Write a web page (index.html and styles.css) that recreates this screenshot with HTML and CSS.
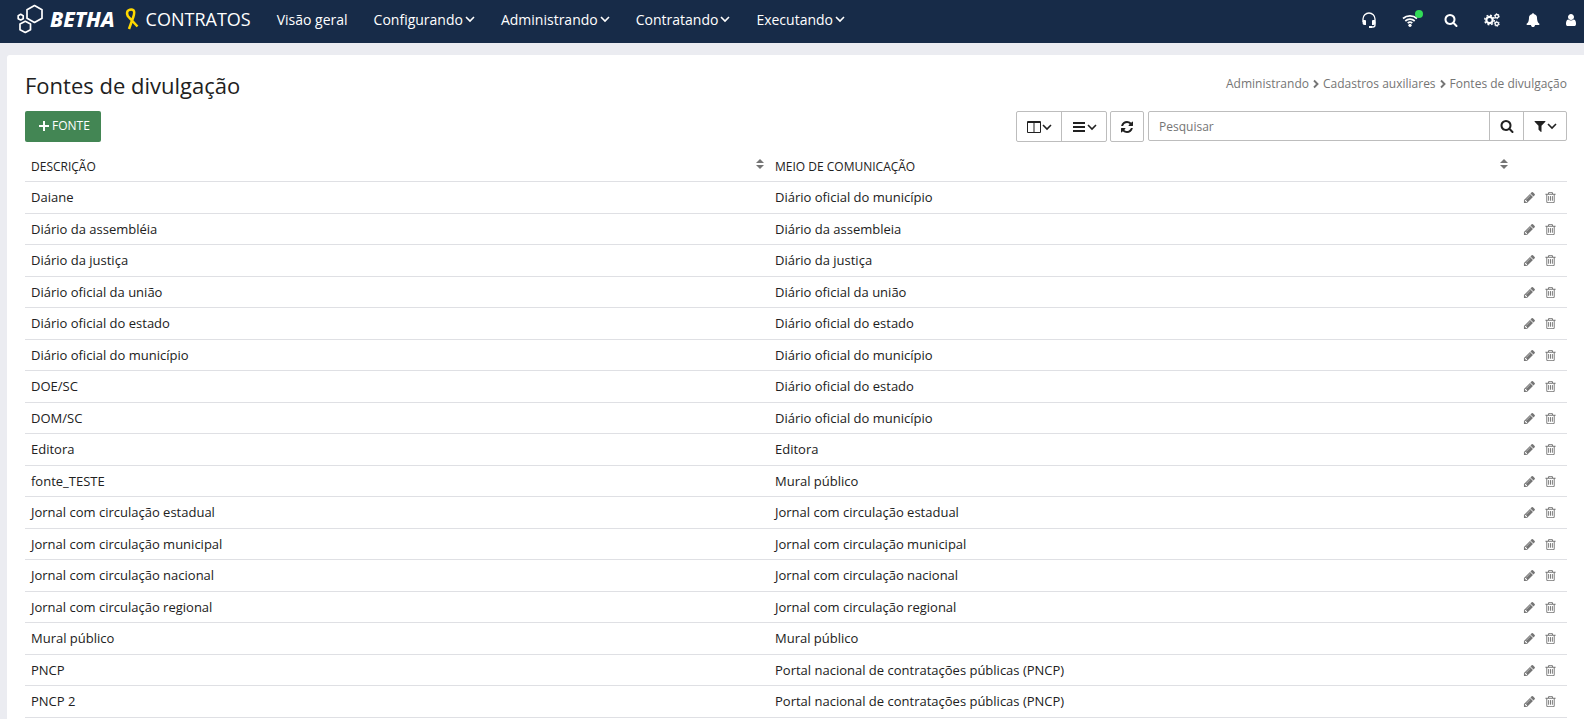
FILE: index.html
```html
<!DOCTYPE html>
<html lang="pt-BR">
<head>
<meta charset="utf-8">
<title>Fontes de divulgação</title>
<link rel="stylesheet" href="styles.css">
</head>
<body>
<svg class="sprite" aria-hidden="true">
  <symbol id="search" viewBox="0 0 1792 1792"><path d="M1216 832q0-185-131.5-316.5t-316.5-131.5-316.5 131.5-131.5 316.5 131.5 316.5 316.5 131.5 316.5-131.5 131.5-316.5zm512 832q0 52-38 90t-90 38q-54 0-90-38l-343-342q-179 124-399 124-143 0-273.5-55.5t-225-150-150-225-55.5-273.5 55.5-273.5 150-225 225-150 273.5-55.5 273.5 55.5 225 150 150 225 55.5 273.5q0 220-124 399l343 343q37 37 37 90z"/></symbol>
  <symbol id="refresh" viewBox="0 0 1792 1792"><path d="M1639 1056q0 5-1 7-64 268-268 434.5t-478 166.5q-146 0-282.5-55t-243.5-157l-129 129q-19 19-45 19t-45-19-19-45v-448q0-26 19-45t45-19h448q26 0 45 19t19 45-19 45l-137 137q71 66 161 102t187 36q134 0 250-65t186-179q11-17 53-117 8-23 30-23h192q13 0 22.5 9.5t9.5 22.5zm25-800v448q0 26-19 45t-45 19h-448q-26 0-45-19t-19-45 19-45l138-138q-148-137-349-137-134 0-250 65t-186 179q-11 17-53 117-8 23-30 23h-199q-13 0-22.5-9.5t-9.5-22.5v-7q65-268 270-434.5t480-166.5q146 0 284 55.5t245 156.5l130-129q19-19 45-19t45 19 19 45z"/></symbol>
  <symbol id="bell" viewBox="0 0 1792 1792"><path d="M1728 1408q0 52-38 90t-90 38h-448q0 106-75 181t-181 75-181-75-75-181h-448q-52 0-90-38t-38-90q50-42 91-88t85-119.5 74.5-158.5 50-206 19.5-260q0-152 117-282.5t307-158.5q-8-19-8-39 0-40 28-68t68-28 68 28 28 68q0 20-8 39 190 28 307 158.5t117 282.5q0 139 19.5 260t50 206 74.5 158.5 85 119.5 91 88z"/></symbol>
  <symbol id="filter" viewBox="0 0 1792 1792"><path d="M1595 295q17 41-14 70l-493 493v742q0 42-39 59-13 5-25 5-27 0-45-19l-256-256q-19-19-19-45v-486l-493-493q-31-29-14-70 17-39 59-39h1280q42 0 59 39z"/></symbol>
  <symbol id="user" viewBox="256 0 1280 1792"><path d="M1536 1399q0 109-62.5 187t-150.5 78h-854q-88 0-150.5-78t-62.5-187q0-85 8.5-160.5t31.5-152 58.5-131 94-89 134.5-34.5q131 128 313 128t313-128q76 0 134.5 34.5t94 89 58.5 131 31.5 152 8.5 160.5zm-256-887q0 159-112.5 271.5t-271.5 112.5-271.5-112.5-112.5-271.5 112.5-271.5 271.5-112.5 271.5 112.5 112.5 271.5z"/></symbol>
  <symbol id="pencil" viewBox="0 0 1792 1792"><path d="M491 1536l91-91-235-235-91 91v107h128v128h107zm523-928q0-22-22-22-10 0-17 7l-542 542q-7 7-7 17 0 22 22 22 10 0 17-7l542-542q7-7 7-17zm-54-192l416 416-832 832h-416v-416zm683 96q0 53-37 90l-166 166-416-416 166-165q36-38 90-38 53 0 91 38l235 234q37 39 37 91z"/></symbol>
  <symbol id="trash" viewBox="0 0 1792 1792"><path d="M704 736v576q0 14-9 23t-23 9h-64q-14 0-23-9t-9-23v-576q0-14 9-23t23-9h64q14 0 23 9t9 23zm256 0v576q0 14-9 23t-23 9h-64q-14 0-23-9t-9-23v-576q0-14 9-23t23-9h64q14 0 23 9t9 23zm256 0v576q0 14-9 23t-23 9h-64q-14 0-23-9t-9-23v-576q0-14 9-23t23-9h64q14 0 23 9t9 23zm128 724v-948h-896v948q0 22 7 40.5t14.5 27 10.5 8.5h832q3 0 10.5-8.5t14.5-27 7-40.5zm-672-1076h448l-48-117q-7-9-17-11h-317q-10 2-17 11zm928 32v64q0 14-9 23t-23 9h-96v948q0 83-47 143.5t-113 60.5h-832q-66 0-113-58.5t-47-141.5v-952h-96q-14 0-23-9t-9-23v-64q0-14 9-23t23-9h309l70-167q15-37 54-63t79-26h320q40 0 79 26t54 63l70 167h309q14 0 23 9t9 23z"/></symbol>
  <symbol id="down" viewBox="0 0 10 14"><path d="M1 5l4 4 4-4" fill="none" stroke="currentColor" stroke-width="1.600"/></symbol>
  <symbol id="right" viewBox="0 0 6 14"><path d="M1 3.500 4.500 7 1 10.500" fill="none" stroke="currentColor" stroke-width="1.900"/></symbol>
  <symbol id="sort" viewBox="0 0 8 12"><path d="M0 5 4 1l4 4zM0 7h8l-4 4z"/></symbol>
  <symbol id="plus" viewBox="0 0 10 10"><path d="M4 0h2v4h4v2H6v4H4V6H0V4h4z"/></symbol>
  <symbol id="columns" viewBox="0 0 14 14"><path fill-rule="evenodd" d="M1 1h12q1 0 1 1v10q0 1-1 1H1q-1 0-1-1V2q0-1 1-1zm0 2v9h5.500V3zm6.500 0v9H13V3z"/></symbol>
  <symbol id="bars" viewBox="0 0 12 14"><path d="M0 2h12v2H0zM0 6h12v2H0zM0 10h12v2H0z"/></symbol>
  <symbol id="headset" viewBox="0 0 14 16"><path d="M1 10V7a6 6 0 0 1 12 0v6q0 2-2 2H8" fill="none" stroke="currentColor" stroke-width="1.300"/><path d="M1 8h2q1 0 1 1v4H2.500Q.5 13 .5 11zM13 8h-2q-1 0-1 1v4h1.500q2 0 2-2zM7 14h3v2H7z"/></symbol>
  <symbol id="wifi" viewBox="0 0 16 14"><path d="M1 5.500a10.500 10.500 0 0 1 14 0M3.300 8a7 7 0 0 1 9.400 0M5.700 10.200a3.500 3.500 0 0 1 4.600 0" fill="none" stroke="currentColor" stroke-width="1.700"/><circle cx="8" cy="12.300" r="1.600"/></symbol>
  <symbol id="cogs" viewBox="0 0 16 14"><g fill="none" stroke="currentColor"><circle cx="5.500" cy="7" r="3.200" stroke-width="2.200"/><circle cx="5.500" cy="7" r="4.800" stroke-width="1.400" stroke-dasharray="1.900 1.870"/><circle cx="12.800" cy="3.200" r="1.700" stroke-width="1.300"/><circle cx="12.800" cy="3.200" r="2.500" stroke-width="1" stroke-dasharray="1.300 1.318"/><circle cx="12.800" cy="10.800" r="1.700" stroke-width="1.300"/><circle cx="12.800" cy="10.800" r="2.500" stroke-width="1" stroke-dasharray="1.300 1.318"/></g></symbol>
</svg>

<header class="topbar">
  <a class="brand" href="#">
    <svg class="brand-mark" viewBox="0 0 27 30" aria-hidden="true"><g fill="none" stroke="currentColor" stroke-width="1.700" stroke-linejoin="round"><path d="M17.500 1.500 25 5.800v8.400l-7.500 4.300-7.500-4.300V5.800z"/><path d="M8.300 17.300 13.500 20v5.700l-5.200 2.800L3 25.700V20z"/><path d="M3.700 10.300 6.200 11.700v3L3.700 16 1.200 14.700v-3z"/></g></svg>
    <span class="brand-name">BETHA</span>
    <svg class="ribbon" viewBox="0 0 14 22" aria-hidden="true"><path d="M12.500 18.500 2.800 8Q1 4 3.500 2.300q3-1.800 5 0Q10 4 8.300 9L4 21" fill="none" stroke="#ffd800" stroke-width="2.500"/></svg>
    <span class="product">CONTRATOS</span>
  </a>
  <nav class="menu">
    <a href="#">Visão geral</a>
    <a href="#">Configurando <svg class="down"><use href="#down"/></svg></a>
    <a href="#">Administrando <svg class="down"><use href="#down"/></svg></a>
    <a href="#">Contratando <svg class="down"><use href="#down"/></svg></a>
    <a href="#">Executando <svg class="down"><use href="#down"/></svg></a>
  </nav>
  <div class="tools">
    <button aria-label="Suporte"><svg class="icon tall"><use href="#headset"/></svg></button>
    <button class="online" aria-label="Conexão"><svg class="icon wide"><use href="#wifi"/></svg></button>
    <button aria-label="Buscar"><svg class="icon"><use href="#search"/></svg></button>
    <button aria-label="Configurações"><svg class="icon wide"><use href="#cogs"/></svg></button>
    <button aria-label="Notificações"><svg class="icon"><use href="#bell"/></svg></button>
    <button aria-label="Usuário"><svg class="icon narrow"><use href="#user"/></svg></button>
  </div>
</header>

<main class="panel">
  <div class="heading">
    <h1>Fontes de divulgação</h1>
    <nav class="crumbs"><a href="#">Administrando</a><svg class="right"><use href="#right"/></svg><a href="#">Cadastros auxiliares</a><svg class="right"><use href="#right"/></svg><span>Fontes de divulgação</span></nav>
  </div>
  <div class="toolbar">
    <button class="add"><svg class="plus"><use href="#plus"/></svg>FONTE</button>
    <div class="group">
      <button aria-label="Colunas"><svg class="icon"><use href="#columns"/></svg><svg class="down"><use href="#down"/></svg></button>
      <button aria-label="Densidade"><svg class="icon"><use href="#bars"/></svg><svg class="down"><use href="#down"/></svg></button>
    </div>
    <div class="group single">
      <button aria-label="Atualizar"><svg class="icon"><use href="#refresh"/></svg></button>
    </div>
    <form class="search">
      <input type="text" placeholder="Pesquisar" aria-label="Pesquisar">
      <button type="button" aria-label="Pesquisar"><svg class="icon"><use href="#search"/></svg></button>
      <button type="button" aria-label="Filtros"><svg class="icon"><use href="#filter"/></svg><svg class="down"><use href="#down"/></svg></button>
    </form>
  </div>
  <table class="grid">
    <thead>
      <tr><th><div class="th">DESCRIÇÃO<svg class="sort"><use href="#sort"/></svg></div></th><th><div class="th">MEIO DE COMUNICAÇÃO<svg class="sort"><use href="#sort"/></svg></div></th><th class="actions"></th></tr>
    </thead>
    <tbody>
      <tr><td>Daiane</td><td>Diário oficial do município</td><td class="actions"><div><button aria-label="Editar"><svg><use href="#pencil"/></svg></button><button aria-label="Excluir"><svg><use href="#trash"/></svg></button></div></td></tr>
      <tr><td>Diário da assembléia</td><td>Diário da assembleia</td><td class="actions"><div><button aria-label="Editar"><svg><use href="#pencil"/></svg></button><button aria-label="Excluir"><svg><use href="#trash"/></svg></button></div></td></tr>
      <tr><td>Diário da justiça</td><td>Diário da justiça</td><td class="actions"><div><button aria-label="Editar"><svg><use href="#pencil"/></svg></button><button aria-label="Excluir"><svg><use href="#trash"/></svg></button></div></td></tr>
      <tr><td>Diário oficial da união</td><td>Diário oficial da união</td><td class="actions"><div><button aria-label="Editar"><svg><use href="#pencil"/></svg></button><button aria-label="Excluir"><svg><use href="#trash"/></svg></button></div></td></tr>
      <tr><td>Diário oficial do estado</td><td>Diário oficial do estado</td><td class="actions"><div><button aria-label="Editar"><svg><use href="#pencil"/></svg></button><button aria-label="Excluir"><svg><use href="#trash"/></svg></button></div></td></tr>
      <tr><td>Diário oficial do município</td><td>Diário oficial do município</td><td class="actions"><div><button aria-label="Editar"><svg><use href="#pencil"/></svg></button><button aria-label="Excluir"><svg><use href="#trash"/></svg></button></div></td></tr>
      <tr><td>DOE/SC</td><td>Diário oficial do estado</td><td class="actions"><div><button aria-label="Editar"><svg><use href="#pencil"/></svg></button><button aria-label="Excluir"><svg><use href="#trash"/></svg></button></div></td></tr>
      <tr><td>DOM/SC</td><td>Diário oficial do município</td><td class="actions"><div><button aria-label="Editar"><svg><use href="#pencil"/></svg></button><button aria-label="Excluir"><svg><use href="#trash"/></svg></button></div></td></tr>
      <tr><td>Editora</td><td>Editora</td><td class="actions"><div><button aria-label="Editar"><svg><use href="#pencil"/></svg></button><button aria-label="Excluir"><svg><use href="#trash"/></svg></button></div></td></tr>
      <tr><td>fonte_TESTE</td><td>Mural público</td><td class="actions"><div><button aria-label="Editar"><svg><use href="#pencil"/></svg></button><button aria-label="Excluir"><svg><use href="#trash"/></svg></button></div></td></tr>
      <tr><td>Jornal com circulação estadual</td><td>Jornal com circulação estadual</td><td class="actions"><div><button aria-label="Editar"><svg><use href="#pencil"/></svg></button><button aria-label="Excluir"><svg><use href="#trash"/></svg></button></div></td></tr>
      <tr><td>Jornal com circulação municipal</td><td>Jornal com circulação municipal</td><td class="actions"><div><button aria-label="Editar"><svg><use href="#pencil"/></svg></button><button aria-label="Excluir"><svg><use href="#trash"/></svg></button></div></td></tr>
      <tr><td>Jornal com circulação nacional</td><td>Jornal com circulação nacional</td><td class="actions"><div><button aria-label="Editar"><svg><use href="#pencil"/></svg></button><button aria-label="Excluir"><svg><use href="#trash"/></svg></button></div></td></tr>
      <tr><td>Jornal com circulação regional</td><td>Jornal com circulação regional</td><td class="actions"><div><button aria-label="Editar"><svg><use href="#pencil"/></svg></button><button aria-label="Excluir"><svg><use href="#trash"/></svg></button></div></td></tr>
      <tr><td>Mural público</td><td>Mural público</td><td class="actions"><div><button aria-label="Editar"><svg><use href="#pencil"/></svg></button><button aria-label="Excluir"><svg><use href="#trash"/></svg></button></div></td></tr>
      <tr><td>PNCP</td><td>Portal nacional de contratações públicas (PNCP)</td><td class="actions"><div><button aria-label="Editar"><svg><use href="#pencil"/></svg></button><button aria-label="Excluir"><svg><use href="#trash"/></svg></button></div></td></tr>
      <tr><td>PNCP 2</td><td>Portal nacional de contratações públicas (PNCP)</td><td class="actions"><div><button aria-label="Editar"><svg><use href="#pencil"/></svg></button><button aria-label="Excluir"><svg><use href="#trash"/></svg></button></div></td></tr>
    </tbody>
  </table>
</main>
</body>
</html>
```
FILE: styles.css
```css
* { box-sizing: border-box; }
body {
  margin: 0;
  min-height: 100vh;
  display: flex;
  flex-direction: column;
  background: #ebecf1;
  color: #212121;
  font: 13px/1.5 "Open Sans", sans-serif;
}
a { color: inherit; text-decoration: none; }
button { margin: 0; padding: 0; border: 0; background: none; color: inherit; font: inherit; cursor: pointer; }
svg { display: block; flex: none; fill: currentColor; }
.sprite { position: absolute; width: 0; height: 0; }
.icon { width: 14px; height: 14px; }
.icon.wide { width: 16px; }
.icon.narrow { width: 10px; }
.icon.tall { height: 16px; }
.down { width: 10px; height: 14px; }

.topbar {
  display: flex;
  align-items: center;
  height: 43px;
  padding: 0 8px 3px 17px;
  background: #172b48;
  color: #fff;
}
.brand { display: flex; align-items: center; padding-bottom: 2px; }
.brand-mark { width: 27px; height: 30px; }
.brand-name { margin-left: 6px; font: italic 800 21px/24px "Noto Sans", sans-serif; }
.ribbon { width: 14px; height: 22px; margin: 0 7px 0 10px; }
.product { font-size: 18px; line-height: 24px; }
.menu { display: flex; margin-left: 13px; padding-bottom: 2px; font-size: 14px; }
.menu a { display: flex; align-items: center; gap: 2px; padding: 0 13px; }
.tools { display: flex; align-items: center; gap: 26px; margin-left: auto; }
.online { position: relative; }
.online::after {
  content: "";
  position: absolute;
  top: -3px;
  right: -5px;
  width: 8px;
  height: 8px;
  border-radius: 50%;
  background: #31dc57;
}

.panel {
  flex: 1;
  margin: 12px 0 0 7px;
  padding: 14px 17px 0 18px;
  border-top-left-radius: 3px;
  background: #fff;
}
.heading { display: flex; justify-content: space-between; height: 42px; }
h1 { margin: 0; font-size: 22px; font-weight: 400; line-height: 33px; }
.crumbs { display: flex; align-items: center; gap: 4px; height: 30px; color: #757575; font-size: 12px; }
.right { width: 6px; height: 14px; }

.toolbar { display: flex; align-items: flex-start; height: 38px; }
.add {
  display: flex;
  align-items: center;
  gap: 3px;
  height: 31px;
  margin-right: auto;
  padding: 0 11px 2px 14px;
  border-radius: 2px;
  background: #438654;
  color: #fff;
  font-size: 12px;
}
.plus { width: 10px; height: 10px; }
.group { display: flex; height: 31px; margin-right: 3px; border: 1px solid #bdbdbd; border-radius: 2px; }
.group button { display: flex; align-items: center; justify-content: center; gap: 1px; width: 44px; }
.group button + button { width: 45px; border-left: 1px solid #bdbdbd; }
.group.single { margin-right: 4px; }
.single button { width: 32px; }
.search { display: flex; width: 419px; height: 30px; border: 1px solid #bdbdbd; border-radius: 2px; }
.search input { flex: 1; min-width: 0; padding: 2px 10px 0; border: 0; background: none; font: inherit; font-size: 12px; outline: 0; }
.search input::placeholder { color: #757575; }
.search button { display: flex; align-items: center; justify-content: center; width: 34px; border-left: 1px solid #bdbdbd; }
.search button:last-child { width: 43px; }

.grid { width: 100%; border-collapse: separate; border-spacing: 0; table-layout: fixed; }
.grid th, .grid td { padding: 6px 6px 5px; border-bottom: 1px solid #dfe0e4; text-align: left; }
.grid th { padding: 7px 5px 4px 6px; font-size: 12px; font-weight: 500; }
.th { display: flex; align-items: center; justify-content: space-between; height: 21px; }
.sort { width: 8px; height: 12px; margin-bottom: 6px; color: #757575; }
.grid .actions { width: 54px; padding-right: 10px; }
.actions div { display: flex; justify-content: flex-end; gap: 8px; color: #757575; }
.actions svg { width: 13px; height: 13px; }
```
